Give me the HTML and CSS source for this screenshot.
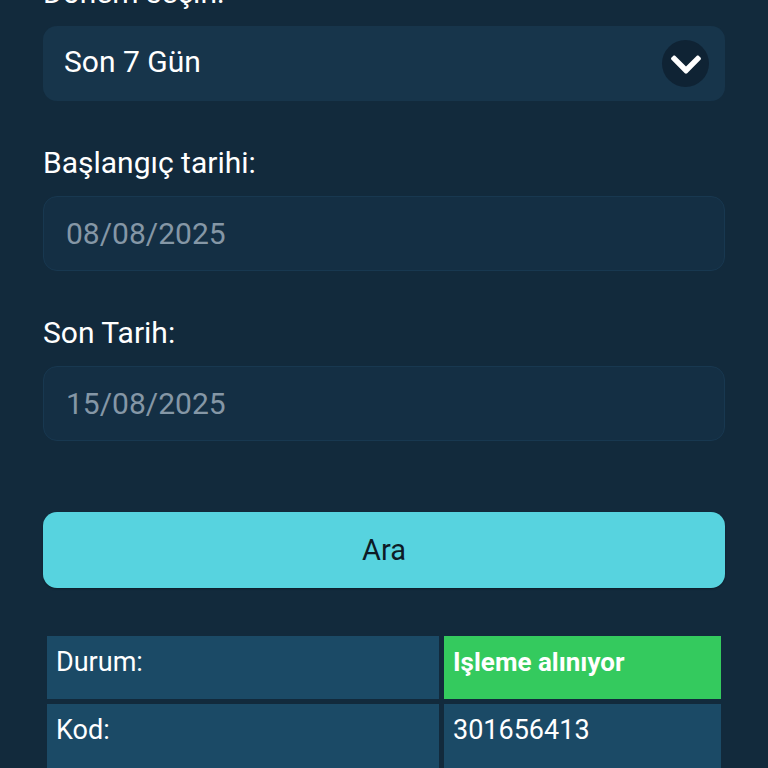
FILE: index.html
```html
<!DOCTYPE html>
<html lang="tr">
<head>
<meta charset="utf-8">
<link rel="stylesheet" href="styles.css">
</head>
<body>
<div class="page">
  <div class="field first">
    <div class="label">Dönem seçin:</div>
    <div class="select">
      <span class="select-text">Son 7 Gün</span>
      <span class="chev">
        <svg width="30" height="19" viewBox="5 120 438 270"><path fill="#ffffff" d="M207.029 381.476L12.686 187.132c-9.373-9.373-9.373-24.569 0-33.941l22.667-22.667c9.357-9.357 24.522-9.375 33.901-.04L224 284.505l154.745-154.021c9.379-9.335 24.544-9.317 33.901.04l22.667 22.667c9.373 9.373 9.373 24.569 0 33.941L240.971 381.476c-9.373 9.372-24.569 9.372-33.942 0z"/></svg>
      </span>
    </div>
  </div>
  <div class="field">
    <div class="label">Başlangıç tarihi:</div>
    <div class="input">08/08/2025</div>
  </div>
  <div class="field">
    <div class="label">Son Tarih:</div>
    <div class="input">15/08/2025</div>
  </div>
  <button class="btn">Ara</button>
  <div class="table">
    <div class="cell">Durum:</div>
    <div class="cell status">Işleme alınıyor</div>
    <div class="cell tall">Kod:</div>
    <div class="cell tall">301656413</div>
  </div>
</div>
</body>
</html>
```
FILE: styles.css
```css
html, body {
  margin: 0;
  padding: 0;
  background: #122a3c;
  overflow: hidden;
}
body {
  font-family: Roboto, "Noto Sans", sans-serif;
  color: #ffffff;
}
.page {
  padding: 0 43px;
  display: flex;
  flex-direction: column;
}
.field {
  display: flex;
  flex-direction: column;
  margin-top: 45px;
}
.field.first {
  margin-top: -24px;
}
.label {
  font-size: 30px;
  line-height: 34px;
  height: 34px;
  margin-bottom: 16px;
}
.select {
  height: 75px;
  box-sizing: border-box;
  background: #17354b;
  border-radius: 14px;
  display: flex;
  align-items: center;
  justify-content: space-between;
  padding: 0 16px 0 21px;
}
.select-text {
  font-size: 30px;
  margin-top: -5px;
}
.chev {
  width: 47px;
  height: 47px;
  border-radius: 50%;
  background: #0f2334;
  display: flex;
  align-items: center;
  justify-content: center;
}
.chev svg { display: block; margin-top: 2px; }
.input {
  height: 75px;
  box-sizing: border-box;
  background: #142f44;
  border: 1px solid #183850;
  border-radius: 14px;
  display: flex;
  align-items: center;
  padding: 0 22px;
  font-size: 30px;
  color: #8597a6;
}
.btn {
  margin-top: 71px;
  height: 76px;
  border: none;
  border-radius: 14px;
  background: #57d3df;
  color: #0d1b26;
  font-family: Roboto, "Noto Sans", sans-serif;
  font-size: 29px;
  box-shadow: 0 1px 2px rgba(0,0,0,0.3);
}
.table {
  margin: 48px 4px 0 4px;
  display: grid;
  grid-template-columns: 392px 1fr;
  gap: 5px;
}
.cell {
  background: #1b4a66;
  height: 63px;
  box-sizing: border-box;
  padding: 10px 9px 0 9px;
  font-size: 27px;
  line-height: 32px;
}
.cell.status {
  background: #34ca5e;
  font-weight: bold;
  font-size: 26px;
}
.cell.tall {
  height: 90px;
}
```
